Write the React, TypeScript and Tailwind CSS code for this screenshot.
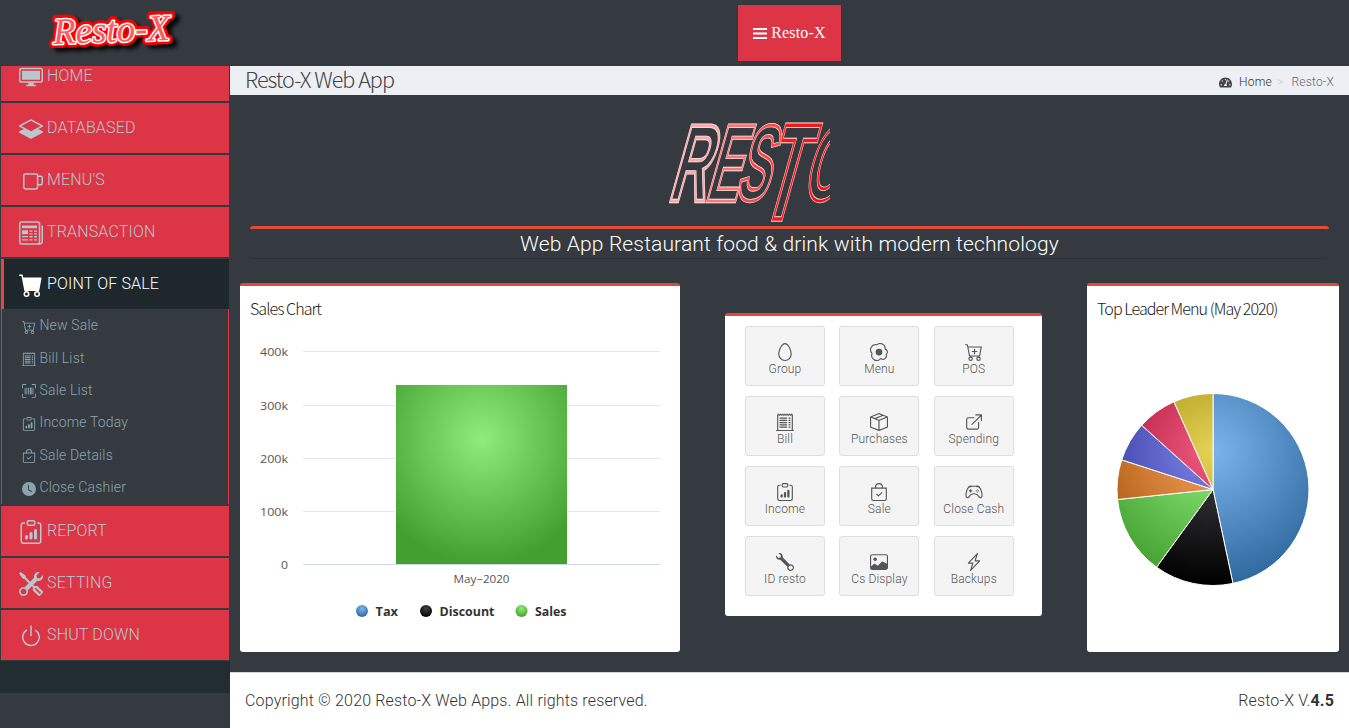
import React from "react";
import {
  BsLayersHalf, BsCartFill, BsCartPlus, BsReceiptCutoff, BsUpcScan, BsClipboardData, BsBagCheck,
  BsClockFill, BsTools, BsPower, BsEgg, BsEggFried, BsBoxSeam, BsController, BsWrench, BsImage,
  BsLightningCharge,
} from "react-icons/bs";
import { FaTachometerAlt } from "react-icons/fa";

type IconComponent = (props: { className?: string }) => React.ReactNode;
type Entry = { label: string; icon: IconComponent };

function MonitorIcon({ className }: { className?: string }) {
  return (
    <svg viewBox="0 0 16 16" className={className} fill="currentColor">
      <rect x="0.5" y="2.4" width="15" height="9" rx="1.2" fill="none" stroke="currentColor" />
      <path d="M2 3.9h12v6H2zM6.2 11.5h3.6v1.6h1.6v1.1H4.6v-1.1h1.6z" />
    </svg>
  );
}

function MugIcon({ className }: { className?: string }) {
  return (
    <svg viewBox="0 0 16 16" className={className} fill="none" stroke="currentColor">
      <path d="M3.2 4.3a1 1 0 0 1 1-1h7.2a1 1 0 0 1 1 1v7.6a1.5 1.5 0 0 1-1.5 1.5H4.7a1.5 1.5 0 0 1-1.5-1.5z" />
      <path d="M12.4 4.9h2.1a1 1 0 0 1 1 1v3.4a1.2 1.2 0 0 1-1.2 1.2h-1.9" />
    </svg>
  );
}

function NewsIcon({ className }: { className?: string }) {
  return (
    <svg viewBox="0 0 16 16" className={className} fill="none" stroke="currentColor">
      <rect x="0.5" y="0.7" width="13.2" height="14.6" rx="1.3" />
      <path d="M15.5 3v10.8a1.5 1.5 0 0 1-1.5 1.5h-1" />
      <path d="M2 3.9h10" strokeWidth="1.8" />
      <path d="M2 7.5h4" strokeWidth="2.6" />
      <path d="M2 10.4h4M2 12.6h4M7 6.7h2M10 6.7h2M7 8.6h2M10 8.6h2M7 10.5h2M10 10.5h2M7 12.6h2M10 12.6h2" strokeWidth="0.9" />
    </svg>
  );
}

function OpenIcon({ className }: { className?: string }) {
  return (
    <svg viewBox="0 0 16 16" className={className} fill="none" stroke="currentColor" strokeLinecap="round" strokeLinejoin="round">
      <path d="M8 4.2H3A1.5 1.5 0 0 0 1.5 5.7v7.1A1.5 1.5 0 0 0 3 14.3h7.6a1.5 1.5 0 0 0 1.5-1.5V8.2" />
      <path d="M6.2 10.2l8.3-8.3M9.6 1.7h5v5" />
    </svg>
  );
}

const topItems: Entry[] = [
  { label: "HOME", icon: MonitorIcon },
  { label: "DATABASED", icon: BsLayersHalf },
  { label: "MENU'S", icon: MugIcon },
  { label: "TRANSACTION", icon: NewsIcon },
];
const subItems: Entry[] = [
  { label: "New Sale", icon: BsCartPlus },
  { label: "Bill List", icon: BsReceiptCutoff },
  { label: "Sale List", icon: BsUpcScan },
  { label: "Income Today", icon: BsClipboardData },
  { label: "Sale Details", icon: BsBagCheck },
  { label: "Close Cashier", icon: BsClockFill },
];
const bottomItems: Entry[] = [
  { label: "REPORT", icon: BsClipboardData },
  { label: "SETTING", icon: BsTools },
  { label: "SHUT DOWN", icon: BsPower },
];
const tiles: Entry[] = [
  { label: "Group", icon: BsEgg },
  { label: "Menu", icon: BsEggFried },
  { label: "POS", icon: BsCartPlus },
  { label: "Bill", icon: BsReceiptCutoff },
  { label: "Purchases", icon: BsBoxSeam },
  { label: "Spending", icon: OpenIcon },
  { label: "Income", icon: BsClipboardData },
  { label: "Sale", icon: BsBagCheck },
  { label: "Close Cash", icon: BsController },
  { label: "ID resto", icon: BsWrench },
  { label: "Cs Display", icon: BsImage },
  { label: "Backups", icon: BsLightningCharge },
];

function MenuItem({ label, icon: Icon, active = false }: Entry & { active?: boolean }) {
  return (
    <a
      className={
        active
          ? "flex h-[50px] shrink-0 items-center border-l-[3px] border-[#dd4b39] bg-[#1e282c] pl-[15px] text-white"
          : "flex h-[50px] shrink-0 items-center bg-[#dc3545] pl-[18px] text-[#b8c7ce]"
      }
    >
      <Icon className="mt-px size-6" />
      <span className="ml-1 text-[16px] font-light leading-[50px] tracking-[0.16px]">{label}</span>
    </a>
  );
}

function BrandLogo() {
  const text = { x: 53, y: 42, textLength: 117, lengthAdjust: "spacingAndGlyphs" as const };
  return (
    <svg
      width="230"
      height="66"
      className="font-['Liberation_Serif',serif] text-[37px] font-normal italic"
      strokeLinejoin="round"
    >
      <defs>
        <filter id="shade" x="-10%" y="-20%" width="125%" height="150%">
          <feDropShadow dx="5" dy="4" stdDeviation="2" floodColor="#000" floodOpacity="0.9" />
        </filter>
      </defs>
      <g transform="rotate(-2 110 30)">
        <text {...text} fill="#f00" stroke="#f00" strokeWidth="8" filter="url(#shade)">Resto-X</text>
        <text {...text} fill="#fff" stroke="#fff" strokeWidth="3">Resto-X</text>
        <text {...text} fill="#ff5a5f">Resto-X</text>
      </g>
    </svg>
  );
}

const heroLetters = [
  { c: "O", x: 801, base: 200, sx: 0.5, h: 74, color: "#ff0808" },
  { c: "T", x: 759, base: 219, sx: 0.6, h: 94, color: "#ff1414" },
  { c: "S", x: 734, base: 200, sx: 0.49, h: 74, color: "#ff4646" },
  { c: "E", x: 704, base: 200.5, sx: 0.5, h: 75.5, color: "#ff7373" },
  { c: "R", x: 667, base: 200.5, sx: 0.53, h: 75.5, color: "#ffa8a8" },
];

function HeroBanner() {
  return (
    <svg width="180" height="110" viewBox="654 116 180 110" className="font-['Liberation_Sans',sans-serif] text-[100px] font-bold">
      <defs>
        <clipPath id="frame">
          <rect x="654" y="116" width="176" height="108" />
        </clipPath>
      </defs>
      <g clipPath="url(#frame)" fill="none">
        {heroLetters.map((l) => (
          <g key={l.c} transform={`translate(${l.x} ${l.base}) skewX(-15.7) scale(${l.sx} ${l.h / 69})`}>
            <text stroke="#ffe4e4" strokeWidth="4">{l.c}</text>
            <text stroke={l.color} strokeWidth="2.5">{l.c}</text>
          </g>
        ))}
      </g>
    </svg>
  );
}

const chartTicks = [
  { label: "400k", y: 351.5 },
  { label: "300k", y: 405.5 },
  { label: "200k", y: 458.5 },
  { label: "100k", y: 511.5 },
  { label: "0", y: 564.5 },
];
const legend = [
  { label: "Tax", x: 362, w: 22.5, from: "#7cb5ec", to: "#2f689f" },
  { label: "Discount", x: 426, w: 55, from: "#434348", to: "#000" },
  { label: "Sales", x: 521.5, w: 31.5, from: "#90ed7d", to: "#43a030" },
];

function SalesChart() {
  return (
    <svg width="440" height="310" viewBox="240 325 440 310" className="font-['Open_Sans',sans-serif]">
      <defs>
        <radialGradient id="bar" cx="0.5" cy="0.3" r="0.7">
          <stop offset="0" stopColor="#90ed7d" />
          <stop offset="1" stopColor="#43a030" />
        </radialGradient>
        {legend.map((l) => (
          <radialGradient key={l.label} id={`dot-${l.label}`} cx="0.5" cy="0.3" r="0.7">
            <stop offset="0" stopColor={l.from} />
            <stop offset="1" stopColor={l.to} />
          </radialGradient>
        ))}
      </defs>
      {chartTicks.map((t) => (
        <g key={t.label}>
          <path d={`M303 ${t.y}H660`} stroke={t.label === "0" ? "#ccd6eb" : "#e6e6e6"} />
          <text
            x={t.label === "0" ? 281 : 260}
            y={t.y + 4}
            textLength={t.label === "0" ? 7 : 28}
            lengthAdjust="spacingAndGlyphs"
            fontSize="11"
            fontWeight="500"
            fill="#555"
          >
            {t.label}
          </text>
        </g>
      ))}
      <rect x="395" y="384" width="173" height="180" fill="#fff" />
      <rect x="396" y="385" width="171" height="179" fill="url(#bar)" />
      <text x="453.5" y="583" textLength="56" lengthAdjust="spacingAndGlyphs" fontSize="11" fontWeight="500" fill="#555">
        May−2020
      </text>
      {legend.map((l) => (
        <g key={l.label}>
          <circle cx={l.x} cy="611" r="6" fill={`url(#dot-${l.label})`} />
          <text x={l.x + 13.5} y="616" textLength={l.w} lengthAdjust="spacingAndGlyphs" fontSize="12" fontWeight="700" fill="#333">
            {l.label}
          </text>
        </g>
      ))}
    </svg>
  );
}

const slices = [
  { v: 7, from: "#7cb5ec", to: "#2f689f" },
  { v: 2, from: "#434348", to: "#000000" },
  { v: 2, from: "#90ed7d", to: "#43a030" },
  { v: 1, from: "#f7a35c", to: "#aa560f" },
  { v: 1, from: "#8085e9", to: "#33389c" },
  { v: 1, from: "#f15c80", to: "#a40f33" },
  { v: 1, from: "#e4d354", to: "#978607" },
];

function LeaderPie() {
  let sum = 0;
  const at = (n: number) => {
    const a = (n / 15) * Math.PI * 2;
    return `${(96 * Math.sin(a)).toFixed(2)} ${(-96 * Math.cos(a)).toFixed(2)}`;
  };
  return (
    <svg width="252" height="200" viewBox="-126 -100.5 252 200">
      {slices.map((s, i) => {
        const start = sum;
        sum += s.v;
        return (
          <g key={s.from}>
            <radialGradient id={`pie-${i}`} gradientUnits="userSpaceOnUse" cx="0" cy="-38.4" r="134.4">
              <stop offset="0" stopColor={s.from} />
              <stop offset="1" stopColor={s.to} />
            </radialGradient>
            <path d={`M0 0L${at(start)}A96 96 0 0 1 ${at(sum)}Z`} fill={`url(#pie-${i})`} stroke="#fff" strokeLinejoin="round" />
          </g>
        );
      })}
    </svg>
  );
}

export default function App() {
  return (
    <div className="flex h-[728px] w-[1349px] flex-col overflow-hidden bg-[#343a40] font-['Roboto',sans-serif] text-[#333]">
      <header className="flex h-[66px] shrink-0">
        <BrandLogo />
        <div className="flex flex-1 justify-center pt-[5px]">
          <button className="flex h-14 w-[103px] items-center justify-center gap-1 bg-[#dc3545] font-['Liberation_Serif',serif] text-[16px] tracking-[0.15px] text-white">
            <svg width="14" height="11" viewBox="0 0 14 11" className="shrink-0" aria-hidden="true">
              <path d="M0 1h14M0 5.5h14M0 10h14" stroke="#fff" strokeWidth="2" />
            </svg>
            Resto-X
          </button>
        </div>
      </header>

      <div className="flex min-h-0 flex-1">
        <aside className="flex w-[230px] shrink-0 flex-col overflow-hidden">
          <nav className="-mt-[15px] flex flex-col gap-0.5 pl-px pr-px">
            {topItems.map((m) => (
              <MenuItem key={m.label} {...m} />
            ))}
            <div>
              <MenuItem label="POINT OF SALE" icon={BsCartFill} active />
              <div className="flex h-[195px] flex-col border-x border-[#dc3545]">
                {subItems.map(({ label, icon: Icon }) => (
                  <a key={label} className="flex h-[32.4px] items-center pl-5 text-[14px] font-light text-[#8aa4af]">
                    <Icon className="mt-[3px] size-3.5" />
                    <span className="ml-[3.5px] mt-px tracking-[0.17px]">{label}</span>
                  </a>
                ))}
              </div>
            </div>
            {bottomItems.map((m) => (
              <MenuItem key={m.label} {...m} />
            ))}
          </nav>
          <div className="mt-px h-8 bg-[#222d32]" />
        </aside>

        <div className="flex min-w-0 flex-1 flex-col">
          <div className="flex h-[29px] shrink-0 items-center justify-between bg-[#ecf0f5] pl-[15px] pr-[15px]">
            <h1 className="pb-[3px] font-['Noto_Sans_CJK_SC',sans-serif] text-[21.6px] font-light leading-[26px] tracking-[-1px] text-[#444]">
              Resto-X Web App
            </h1>
            <div className="flex items-center pt-[3px] text-[12px] font-[350] tracking-[0.2px]">
              <FaTachometerAlt className="mr-[7px] size-[13px] text-[#444]" />
              <span className="text-[#333]">Home</span>
              <span className="ml-[5px] mr-[8px] text-[#ccc]">&gt;</span>
              <span className="text-[#666]">Resto-X</span>
            </div>
          </div>

          <main className="flex h-[577px] shrink-0 flex-col px-[10px] pt-[21px]">
            <div className="flex h-[110px] justify-center pr-[91px]">
              <HeroBanner />
            </div>
            <div className="mx-[10px] h-[32px] rounded-[3px] border-t-[3px] border-[#dd4b39] text-center text-[21px] font-light leading-[31px] tracking-[0.14px] text-white shadow-[0_1px_0_rgba(0,0,0,0.12)]">
              Web App Restaurant food &amp; drink with modern technology
            </div>
            <div className="mt-[25px] flex items-start justify-between">
              <section className="h-[369px] w-[440px] rounded-[3px] border-t-[3px] border-[#dd4b39] bg-white">
                <h2 className="h-[39px] pl-[10px] pt-[9px] font-['Noto_Sans_CJK_SC',sans-serif] text-[16.1px] font-light leading-[26px] tracking-[-0.97px] text-[#222]">
                  Sales Chart
                </h2>
                <SalesChart />
              </section>
              <section className="mt-[30px] h-[303px] w-[317px] rounded-[3px] border-t-[3px] border-[#dd4b39] bg-white">
                <div className="grid grid-cols-[80px_80px_80px] gap-x-[14.4px] gap-y-[10px] pl-5 pt-[10px]">
                  {tiles.map(({ label, icon: Icon }) => (
                    <button
                      key={label}
                      className="flex h-[60px] flex-col items-center rounded-[3px] border border-[#ddd] bg-[#f4f4f4] pt-4 text-[12px] font-[350] leading-[14px] tracking-[0.15px] text-[#555]"
                    >
                      <Icon className="size-[18px]" />
                      <span className="mt-px whitespace-nowrap">{label}</span>
                    </button>
                  ))}
                </div>
              </section>
              <section className="h-[369px] w-[252px] rounded-[3px] border-t-[3px] border-[#dd4b39] bg-white">
                <h2 className="h-[103px] pl-[10px] pt-[9px] font-['Noto_Sans_CJK_SC',sans-serif] text-[16.1px] font-light leading-[26px] tracking-[-0.97px] text-[#222]">
                  Top Leader Menu (May 2020)
                </h2>
                <LeaderPie />
              </section>
            </div>
          </main>

          <footer className="flex h-14 shrink-0 items-center justify-between border-t border-[#d2d6de] bg-white px-[15px] text-[16px] font-light tracking-[0.16px] text-[#333]">
            <span>Copyright © 2020 Resto-X Web Apps. All rights reserved.</span>
            <span>
              Resto-X V.<b className="font-bold">4.5</b>
            </span>
          </footer>
        </div>
      </div>
    </div>
  );
}
